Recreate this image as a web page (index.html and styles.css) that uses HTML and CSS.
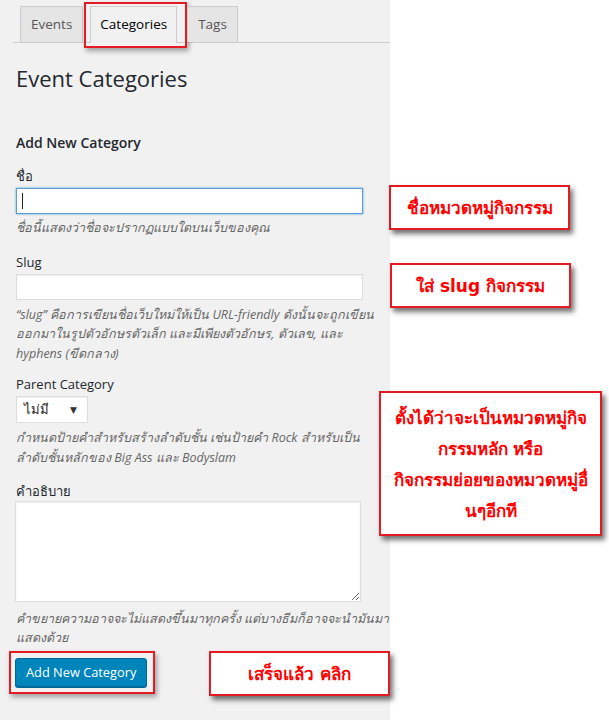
FILE: index.html
```html
<!DOCTYPE html>
<html lang="th">
<head>
<meta charset="utf-8">
<title>Event Categories</title>
<link rel="stylesheet" href="styles.css">
</head>
<body>
<div class="page">
  <div class="panel">
    <nav class="tabs">
      <span class="tab">Events</span>
      <span class="tab active">Categories<span class="hl hl-tab"></span></span>
      <span class="tab">Tags</span>
    </nav>
    <h1 class="title">Event Categories</h1>
    <h2 class="subtitle">Add New Category</h2>

    <div class="field f1">
      <div class="label">ชื่อ</div>
      <div class="input focus"><span class="caret"></span></div>
      <p class="help">ชื่อนี้แสดงว่าชื่อจะปรากฏแบบใดบนเว็บของคุณ</p>
    </div>

    <div class="field f2">
      <div class="label">Slug</div>
      <div class="input"></div>
      <p class="help">“slug” คือการเขียนชื่อเว็บใหม่ให้เป็น URL-friendly ดังนั้นจะถูกเขียน<br>ออกมาในรูปตัวอักษรตัวเล็ก และมีเพียงตัวอักษร, ตัวเลข, และ<br>hyphens (ขีดกลาง)</p>
    </div>

    <div class="field f3">
      <div class="label">Parent Category</div>
      <div class="select"><span>ไม่มี</span><span class="arrow">▼</span></div>
      <p class="help">กำหนดป้ายคำสำหรับสร้างลำดับชั้น เช่นป้ายคำ Rock สำหรับเป็น<br>ลำดับชั้นหลักของ Big Ass และ Bodyslam</p>
    </div>

    <div class="field f4">
      <div class="label">คำอธิบาย</div>
      <textarea class="area"></textarea>
      <p class="help">คำขยายความอาจจะไม่แสดงขึ้นมาทุกครั้ง แต่บางธีมก็อาจจะนำมันมา<br>แสดงด้วย</p>
    </div>

    <div class="btn-wrap">
      <span class="btn">Add New Category</span>
      <span class="hl hl-btn"></span>
    </div>
  </div>
  <div class="blank"></div>

  <div class="note n1">ชื่อหมวดหมู่กิจกรรม</div>
  <div class="note n2">ใส่ slug กิจกรรม</div>
  <div class="note n3">ตั้งได้ว่าจะเป็นหมวดหมู่กิจ<br>กรรมหลัก หรือ<br>กิจกรรมย่อยของหมวดหมู่อื่<br>นๆอีกที</div>
  <div class="note n4">เสร็จแล้ว คลิก</div>
</div>
</body>
</html>
```
FILE: styles.css
```css
* { box-sizing: border-box; }
html, body { margin: 0; padding: 0; background: #fff; }
body {
  font-family: "Open Sans", "Noto Sans", "DejaVu Sans", sans-serif;
  color: #23282d;
}
.page {
  position: relative;
  display: flex;
  width: 609px;
  height: 720px;
  overflow: hidden;
}
.panel {
  width: 390px;
  height: 720px;
  background: #f1f1f1;
  padding: 0 0 0 16px;
}
.blank { flex: 1; background: #fff; }

.tabs {
  display: flex;
  align-items: flex-end;
  margin-left: -3px;
  padding: 7px 0 0 7px;
  height: 43px;
  border-bottom: 1px solid #ccc;
}
.tab {
  position: relative;
  height: 36px;
  line-height: 34px;
  padding: 0 10px;
  border: 1px solid #ccc;
  border-bottom: none;
  background: #e5e5e5;
  color: #555;
  font-size: 13.5px;
  margin-right: 7px;
}
.tab.active {
  background: #f1f1f1;
  color: #000;
  margin-right: 10px;
  height: 37px;
  margin-bottom: -1px;
  padding: 0 9px 0 9px;
}
.hl {
  position: absolute;
  border: 2px solid #e31b23;
  box-shadow: 2px 3px 5px rgba(0,0,0,0.35);
  pointer-events: none;
}
.hl-tab { left: -7px; right: -11px; top: -5px; bottom: -5px; }

.title {
  margin: 20px 0 0;
  font-size: 22px;
  font-weight: 400;
  line-height: 30px;
  color: #23282d;
}
.subtitle {
  margin: 40px 0 0;
  font-size: 14px;
  font-weight: 600;
  line-height: 20px;
}
.label {
  font-size: 13px;
  line-height: 20px;
}
.input, .select {
  background: #fff;
  border: 1px solid #ddd;
  box-shadow: inset 0 1px 2px rgba(0,0,0,0.07);
}
.input {
  width: 347px;
  height: 26px;
  margin-top: 2px;
  display: flex;
  align-items: center;
  padding-left: 5px;
}
.input.focus {
  border-color: #5b9dd9;
  box-shadow: 0 0 2px rgba(30,140,190,0.8);
}
.caret { width: 1px; height: 16px; background: #222; }
.help {
  margin: 4px 0 0;
  font-size: 12.5px;
  line-height: 19.5px;
  font-style: italic;
  color: #666;
  white-space: nowrap;
}
.f1 { margin-top: 13px; }
.f2 { margin-top: 14px; }
.f2 .help { margin-top: 5px; }
.f3 { margin-top: 11px; }
.select {
  width: 72px;
  height: 27px;
  margin-top: 2px;
  display: flex;
  align-items: center;
  justify-content: space-between;
  padding: 0 10px 0 7px;
  font-size: 13px;
  color: #222;
}
.arrow { font-size: 9px; color: #333; }
.f3 .help { margin-top: 5px; line-height: 20px; }
.f4 { margin-top: 13px; }
.area {
  display: block;
  width: 346px;
  height: 101px;
  margin: 0 0 0 -1px;
  border: 1px solid #ddd;
  background: #fff;
  resize: both;
  box-shadow: inset 0 1px 2px rgba(0,0,0,0.07);
}
.f4 .help { margin-top: 8px; line-height: 18.5px; }

.btn-wrap {
  position: relative;
  display: inline-block;
  margin: 11px 0 0 -1px;
}
.btn {
  display: block;
  height: 29px;
  line-height: 27px;
  padding: 0 10px 0 10px;
  background: #0085ba;
  border: 1px solid #006799;
  border-radius: 3px;
  box-shadow: 0 1px 0 #006799;
  color: #fff;
  font-size: 12.8px;
}
.hl-btn { left: -6px; right: -8px; top: -7px; bottom: -7px; }

.note {
  position: absolute;
  background: #fff;
  border: 2px solid #e31b23;
  box-shadow: 3px 4px 5px rgba(0,0,0,0.55);
  color: #f00;
  font-family: "DejaVu Sans", "Noto Sans", sans-serif;
  font-weight: 700;
  font-size: 17px;
  text-align: center;
  display: flex;
  align-items: center;
  justify-content: center;
}
.n1 { left: 389px; top: 185px; width: 181px; height: 45px; }
.n2 { left: 390px; top: 263px; width: 181px; height: 45px; }
.n3 { left: 379px; top: 391px; width: 223px; height: 145px; line-height: 31px; padding-top: 2px; }
.n4 { left: 209px; top: 651px; width: 181px; height: 45px; }
```
